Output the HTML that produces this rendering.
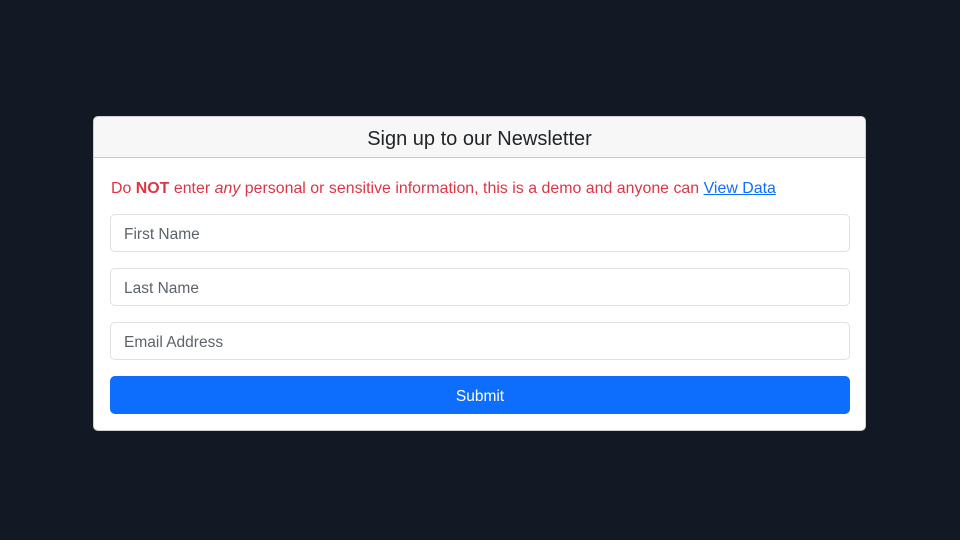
<!DOCTYPE html>
<html><head><style>
body{margin:0;width:960px;height:540px;background:#131924;font-family:"Liberation Sans",sans-serif;overflow:hidden}
.card{position:absolute;left:93px;top:116px;width:771px;height:313px;background:#fff;border:1px solid #cfcfcf;border-radius:5px;overflow:hidden}
.hd{height:40px;background:#f7f7f7;border-bottom:1px solid #c8c8c8;text-align:center;line-height:45px;font-size:20px;color:#212529}
.warn{position:absolute;left:17px;top:63px;font-size:15.9px;color:#dc3545;white-space:nowrap;letter-spacing:0.02px}
.warn a{color:#0d6efd;text-decoration:underline}
.in{position:absolute;left:16px;border:1px solid #dee2e6;border-radius:5px;font-size:15.5px;color:#5c636a;line-height:40px;padding-left:13px;box-sizing:border-box;width:740px;height:38px}
.btn{position:absolute;left:16px;top:259px;width:740px;height:38px;background:#0d6efd;border-radius:5px;color:#fff;text-align:center;line-height:42px;font-size:15.5px}
</style></head><body>
<div class="card">
<div class="hd">Sign up to our Newsletter</div>
<div class="warn">Do <b>NOT</b> enter <i>any</i> personal or sensitive information, this is a demo and anyone can <a>View Data</a></div>
<div class="in" style="top:97px">First Name</div>
<div class="in" style="top:151px">Last Name</div>
<div class="in" style="top:205px">Email Address</div>
<div class="btn">Submit</div>
</div>
</body></html>
